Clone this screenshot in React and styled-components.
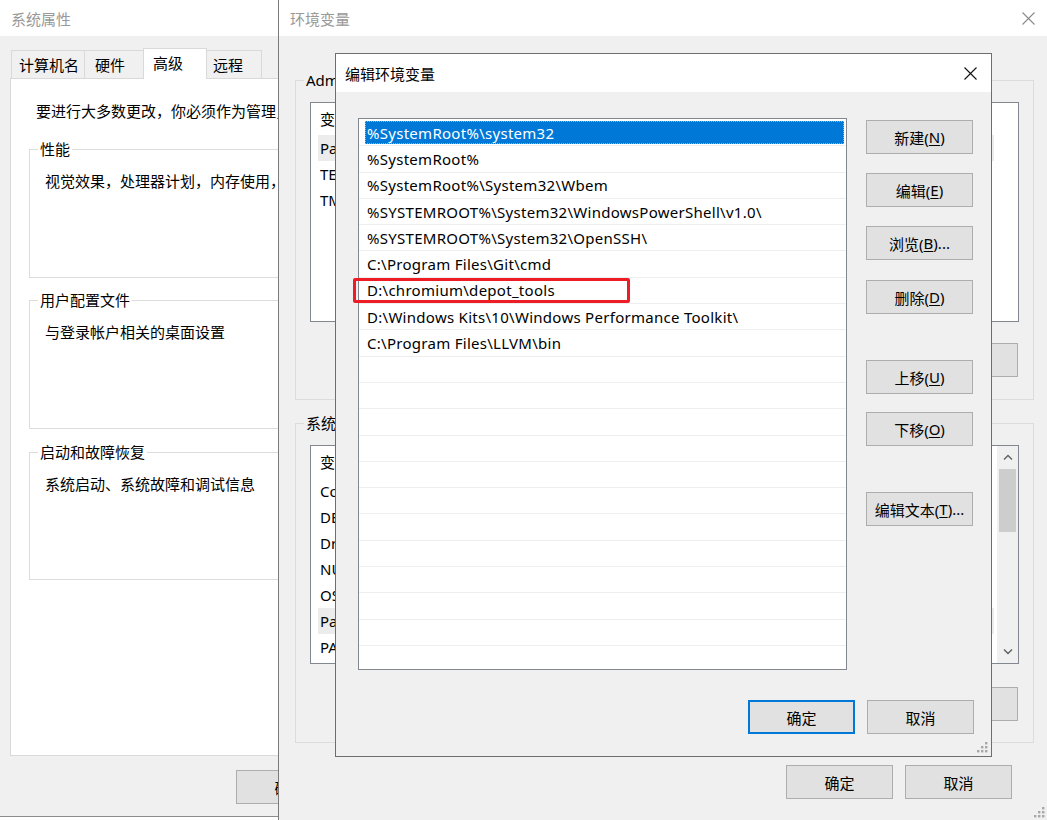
import React from 'react'
import styled, { createGlobalStyle } from 'styled-components'

const GlobalStyle = createGlobalStyle`
html, body {
  margin: 0;
  padding: 0;
}
body {
  width: 1047px;
  height: 820px;
  overflow: hidden;
  background: #ffffff;
  font-family: "Noto Sans", "Noto Sans CJK SC", sans-serif;
  font-size: 15px;
  color: #000;
}
`

const pathEntries = [
  '%SystemRoot%\\system32',
  '%SystemRoot%',
  '%SystemRoot%\\System32\\Wbem',
  '%SYSTEMROOT%\\System32\\WindowsPowerShell\\v1.0\\',
  '%SYSTEMROOT%\\System32\\OpenSSH\\',
  'C:\\Program Files\\Git\\cmd',
  'D:\\chromium\\depot_tools',
  'D:\\Windows Kits\\10\\Windows Performance Toolkit\\',
  'C:\\Program Files\\LLVM\\bin',
]

const userVars = [
  { name: 'Path', value: 'C:\\Users\\Administrator\\AppData\\Local\\Microsoft\\WindowsApps;', hl: true },
  { name: 'TEMP', value: 'C:\\Users\\Administrator\\AppData\\Local\\Temp' },
  { name: 'TMP', value: 'C:\\Users\\Administrator\\AppData\\Local\\Temp' },
]

const systemVars = [
  { name: 'ComSpec', value: 'C:\\Windows\\system32\\cmd.exe' },
  { name: 'DEPOT_TOOLS_WIN_TOOLCHAIN', value: '0' },
  { name: 'DriverData', value: 'C:\\Windows\\System32\\Drivers\\DriverData' },
  { name: 'NUMBER_OF_PROCESSORS', value: '8' },
  { name: 'OS', value: 'Windows_NT' },
  { name: 'Path', value: 'C:\\Windows\\system32;C:\\Windows;', hl: true },
  { name: 'PATHEXT', value: '.COM;.EXE;.BAT;.CMD;.VBS;.VBE;.JS' },
]

export default function App() {
  const rows = [...pathEntries, ...Array(12).fill('')]
  return (
    <Desktop>
      <GlobalStyle />

      {/* 系统属性 */}
      <Window $x={-1} $y={-1} $w={593} $h={818} $border="#8c8c8c" $z={1}>
        <TitleBar $h={36} $pl={11}>
          <span>系统属性</span>
        </TitleBar>
        <PropsBody>
          <TabStrip>
            <Tab $w={74} $pl={7}>计算机名</Tab>
            <Tab $w={60} $pl={10}>硬件</Tab>
            <Tab $w={64} $pl={9} $active>高级</Tab>
            <Tab $w={56} $pl={6}>远程</Tab>
          </TabStrip>
          <TabPanel>
            <Intro>要进行大多数更改，你必须作为管理员登录。</Intro>
            <GroupBox $h={129} $mt={28} $pad="21px 0 0 15px">
              <GroupLabel $bg="#fff">性能</GroupLabel>
              <GroupText>视觉效果，处理器计划，内存使用，以及虚拟内存</GroupText>
            </GroupBox>
            <GroupBox $h={129} $mt={22} $pad="21px 0 0 15px">
              <GroupLabel $bg="#fff">用户配置文件</GroupLabel>
              <GroupText>与登录帐户相关的桌面设置</GroupText>
            </GroupBox>
            <GroupBox $h={128} $mt={23} $pad="21px 0 0 15px">
              <GroupLabel $bg="#fff">启动和故障恢复</GroupLabel>
              <GroupText>系统启动、系统故障和调试信息</GroupText>
            </GroupBox>
          </TabPanel>
          <ButtonRow $mt={14}>
            <Button>确定</Button>
            <Button>取消</Button>
            <Button>应用(<u>A</u>)</Button>
          </ButtonRow>
        </PropsBody>
      </Window>

      {/* 环境变量 */}
      <Window $x={278} $y={-1} $w={771} $h={823} $border="#7a7a7a" $z={2}>
        <TitleBar $h={36} $pl={11} $pr={13}>
          <span>环境变量</span>
          <CloseIcon color="#8a8a8a" />
        </TitleBar>
        <EnvBody>
          <GroupBox $h={320} $mt={0} $pad="21px 14px 0 14px">
            <GroupLabel $bg="#f0f0f0">Administrator 的用户变量(<u>U</u>)</GroupLabel>
            <ListBox $h={220}>
              <VarList>
                <VarHeader>
                  <VarName>变量</VarName>
                  <span>值</span>
                </VarHeader>
                {userVars.map(v => (
                  <VarRow key={v.name} $hl={v.hl}>
                    <VarName>{v.name}</VarName>
                    <VarValue>{v.value}</VarValue>
                  </VarRow>
                ))}
              </VarList>
            </ListBox>
            <ButtonRow $mt={21} $pr={1}>
              <Button>新建(<u>N</u>)...</Button>
              <Button>编辑(<u>E</u>)...</Button>
              <Button>删除(<u>D</u>)</Button>
            </ButtonRow>
          </GroupBox>
          <GroupBox $h={320} $mt={23} $pad="21px 14px 0 14px">
            <GroupLabel $bg="#f0f0f0">系统变量(<u>S</u>)</GroupLabel>
            <ListBox $h={219}>
              <VarList>
                <VarHeader>
                  <VarName>变量</VarName>
                  <span>值</span>
                </VarHeader>
                {systemVars.map(v => (
                  <VarRow key={v.name} $hl={v.hl}>
                    <VarName>{v.name}</VarName>
                    <VarValue>{v.value}</VarValue>
                  </VarRow>
                ))}
              </VarList>
              <ScrollBar>
                <ScrollArrow>
                  <svg width="10" height="6" viewBox="0 0 10 6">
                    <polyline points="1,5.5 5,1.5 9,5.5" fill="none" stroke="#606060" strokeWidth="1.4" />
                  </svg>
                </ScrollArrow>
                <ScrollThumb />
                <ScrollTrack />
                <ScrollArrow>
                  <svg width="10" height="6" viewBox="0 0 10 6">
                    <polyline points="1,0.5 5,4.5 9,0.5" fill="none" stroke="#606060" strokeWidth="1.4" />
                  </svg>
                </ScrollArrow>
              </ScrollBar>
            </ListBox>
            <ButtonRow $mt={23} $pr={1}>
              <Button>新建(<u>W</u>)...</Button>
              <Button>编辑(<u>I</u>)...</Button>
              <Button>删除(<u>L</u>)</Button>
            </ButtonRow>
          </GroupBox>
          <ButtonRow $mt={22} $pr={22}>
            <Button>确定</Button>
            <Button>取消</Button>
          </ButtonRow>
        </EnvBody>
        <Grip />
      </Window>

      {/* 编辑环境变量 */}
      <Window $x={335} $y={53} $w={657} $h={704} $border="#6e6e6e" $z={3}>
        <TitleBar $h={38} $pl={9} $pr={14} $active>
          <span>编辑环境变量</span>
          <CloseIcon color="#111" />
        </TitleBar>
        <EditBody>
          <EditRow>
            <ListBox $h={552} $w={489}>
              <PathList>
                {rows.map((p, i) => (
                  <PathRow key={i}>
                    <PathText $selected={i === 0}>{p}</PathText>
                  </PathRow>
                ))}
              </PathList>
            </ListBox>
            <ButtonColumn>
              <Button $mt={0}>新建(<u>N</u>)</Button>
              <Button $mt={19}>编辑(<u>E</u>)</Button>
              <Button $mt={19}>浏览(<u>B</u>)...</Button>
              <Button $mt={20}>删除(<u>D</u>)</Button>
              <Button $mt={46}>上移(<u>U</u>)</Button>
              <Button $mt={18}>下移(<u>O</u>)</Button>
              <Button $mt={46}>编辑文本(<u>T</u>)...</Button>
            </ButtonColumn>
          </EditRow>
          <ButtonRow $mt={30}>
            <Button $default>确定</Button>
            <Button>取消</Button>
          </ButtonRow>
          <Highlight />
        </EditBody>
        <Grip />
      </Window>
    </Desktop>
  )
}

function CloseIcon({ color }) {
  return (
    <svg width="13" height="13" viewBox="0 0 13 13">
      <path d="M0.5 0.5 L12.5 12.5 M12.5 0.5 L0.5 12.5" stroke={color} strokeWidth="1.1" fill="none" />
    </svg>
  )
}

function Grip() {
  const dots = [[8, 0], [4, 4], [8, 4], [0, 8], [4, 8], [8, 8]]
  return (
    <GripBox>
      <svg width="11" height="11" viewBox="0 0 11 11">
        {dots.map(([x, y]) => (
          <rect key={`${x}-${y}`} x={x} y={y} width="2.4" height="2.4" fill="#a8a8a8" />
        ))}
      </svg>
    </GripBox>
  )
}

const Desktop = styled.div`
  position: relative;
  width: 1047px;
  height: 820px;
  overflow: hidden;
  background: #ffffff;
`

const Window = styled.div`
  position: absolute;
  left: ${p => p.$x}px;
  top: ${p => p.$y}px;
  width: ${p => p.$w}px;
  height: ${p => p.$h}px;
  z-index: ${p => p.$z};
  box-sizing: border-box;
  border: 1px solid ${p => p.$border};
  background: #f0f0f0;
  display: flex;
  flex-direction: column;
  overflow: hidden;
`

const TitleBar = styled.div`
  flex: 0 0 ${p => p.$h}px;
  box-sizing: border-box;
  background: #ffffff;
  display: flex;
  align-items: center;
  justify-content: space-between;
  padding: 0 ${p => p.$pr || 0}px 0 ${p => p.$pl}px;
  color: ${p => (p.$active ? '#000' : '#999')};
  white-space: nowrap;
`

const PropsBody = styled.div`
  flex: 1;
  display: flex;
  flex-direction: column;
  padding: 12px 10px 12px 10px;
  min-height: 0;
`

const TabStrip = styled.div`
  display: flex;
  align-items: flex-end;
  height: 30px;
  padding-left: 2px;
`

const Tab = styled.div`
  box-sizing: border-box;
  width: ${p => p.$w}px;
  height: ${p => (p.$active ? 31 : 28)}px;
  margin-left: -1px;
  margin-bottom: ${p => (p.$active ? -1 : 0)}px;
  padding-left: ${p => p.$pl}px;
  padding-bottom: ${p => (p.$active ? 3 : 0)}px;
  display: flex;
  align-items: center;
  background: ${p => (p.$active ? '#ffffff' : '#f0f0f0')};
  border: 1px solid #d9d9d9;
  border-bottom: none;
  position: relative;
  z-index: ${p => (p.$active ? 1 : 0)};
  white-space: nowrap;
`

const TabPanel = styled.div`
  flex: 1;
  box-sizing: border-box;
  background: #ffffff;
  border: 1px solid #d9d9d9;
  padding: 22px 18px 0 18px;
  display: flex;
  flex-direction: column;
`

const Intro = styled.div`
  margin-left: 7px;
  line-height: 20px;
  white-space: nowrap;
`

const GroupBox = styled.div`
  position: relative;
  box-sizing: border-box;
  height: ${p => p.$h}px;
  margin-top: ${p => p.$mt}px;
  padding: ${p => p.$pad};
  border: 1px solid #dcdcdc;
  display: flex;
  flex-direction: column;
`

const GroupLabel = styled.div`
  position: absolute;
  top: -11px;
  left: 8px;
  padding: 0 2px;
  line-height: 20px;
  background: ${p => p.$bg};
  white-space: nowrap;
`

const GroupText = styled.div`
  line-height: 20px;
  white-space: nowrap;
`

const ButtonRow = styled.div`
  display: flex;
  justify-content: flex-end;
  gap: 12px;
  margin-top: ${p => p.$mt}px;
  padding-right: ${p => p.$pr || 0}px;
  flex-shrink: 0;
`

const Button = styled.div`
  box-sizing: border-box;
  width: 107px;
  height: 34px;
  flex-shrink: 0;
  margin-top: ${p => p.$mt || 0}px;
  display: flex;
  align-items: center;
  justify-content: center;
  background: #e1e1e1;
  border: ${p => (p.$default ? '2px solid #0078d7' : '1px solid #adadad')};
  color: #000;
  white-space: nowrap;
  u {
    text-underline-offset: 2px;
  }
`

const EnvBody = styled.div`
  flex: 1;
  display: flex;
  flex-direction: column;
  padding: 44px 14px 0 16px;
`

const ListBox = styled.div`
  box-sizing: border-box;
  height: ${p => p.$h}px;
  width: ${p => (p.$w ? `${p.$w}px` : 'auto')};
  flex-shrink: 0;
  background: #ffffff;
  border: 1px solid #828790;
  display: flex;
  overflow: hidden;
`

const VarList = styled.div`
  flex: 1;
  display: flex;
  flex-direction: column;
  min-width: 0;
`

const VarHeader = styled.div`
  height: 32px;
  display: flex;
  align-items: center;
  padding-left: 9px;
  padding-bottom: 2px;
  box-sizing: border-box;
  white-space: nowrap;
`

const VarRow = styled.div`
  box-sizing: border-box;
  width: 676px;
  height: 26px;
  display: flex;
  align-items: center;
  margin-left: 7px;
  padding-left: 2px;
  background: ${p => (p.$hl ? '#ececec' : 'transparent')};
  white-space: nowrap;
  overflow: hidden;
`

const VarName = styled.span`
  width: 190px;
  flex-shrink: 0;
  overflow: hidden;
`

const VarValue = styled.span`
  overflow: hidden;
`

const ScrollBar = styled.div`
  flex: 0 0 21px;
  background: #f0f0f0;
  display: flex;
  flex-direction: column;
  align-items: center;
`

const ScrollArrow = styled.div`
  height: 22px;
  width: 100%;
  display: flex;
  align-items: center;
  justify-content: center;
`

const ScrollThumb = styled.div`
  width: 17px;
  height: 63px;
  margin-top: 1px;
  background: #cdcdcd;
`

const ScrollTrack = styled.div`
  flex: 1;
`

const EditBody = styled.div`
  position: relative;
  flex: 1;
  display: flex;
  flex-direction: column;
  padding: 26px 17px 0 22px;
`

const EditRow = styled.div`
  display: flex;
  gap: 19px;
`

const PathList = styled.div`
  flex: 1;
  padding-top: 1px;
  display: flex;
  flex-direction: column;
  min-width: 0;
`

const PathRow = styled.div`
  box-sizing: border-box;
  height: 26.3px;
  flex-shrink: 0;
  padding: 1px 2px 1px 6px;
  border-bottom: 1px solid #eeeeee;
  display: flex;
`

const PathText = styled.div`
  flex: 1;
  display: flex;
  align-items: center;
  padding-left: 2px;
  letter-spacing: 0.28px;
  background: ${p => (p.$selected ? '#0078d7' : 'transparent')};
  color: ${p => (p.$selected ? '#ffffff' : '#000000')};
  outline: ${p => (p.$selected ? '1px dotted #f0a040' : 'none')};
  outline-offset: -1px;
  white-space: nowrap;
  overflow: hidden;
`

const ButtonColumn = styled.div`
  display: flex;
  flex-direction: column;
  padding-top: 2px;
`

const Highlight = styled.div`
  position: absolute;
  left: 17px;
  top: 186px;
  width: 277px;
  height: 25px;
  box-sizing: border-box;
  border: 3px solid #ee1c25;
  border-radius: 2px;
  pointer-events: none;
`

const GripBox = styled.div`
  position: absolute;
  right: 3px;
  bottom: 3px;
  width: 11px;
  height: 11px;
  line-height: 0;
`
